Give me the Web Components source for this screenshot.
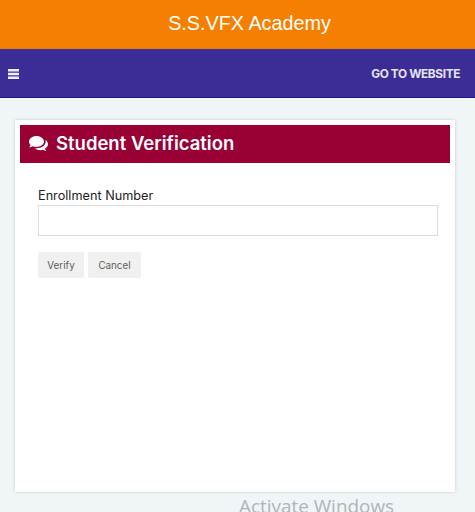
<!DOCTYPE html>
<html>
<head>
<meta charset="utf-8">
<title>Student Verification</title>
<style>
html, body { margin: 0; height: 512px; overflow: hidden; }
body { background: #f0f5f8; font-family: Inter, "Noto Sans", sans-serif; }
</style>
</head>
<body>
<top-banner>S.S.VFX Academy</top-banner>
<nav-bar></nav-bar>
<verify-card title="Student Verification"></verify-card>
<activate-mark></activate-mark>

<script>
class TopBanner extends HTMLElement {
    constructor() {
        super();
        this.shadow = this.attachShadow({ mode: 'open' });
    }

    connectedCallback() {
        this.shadow.innerHTML =
        `
        <style>
            :host{
                align-items: center;
                background-color: #f57f00;
                border-bottom: 1px solid #c98a10;
                box-sizing: border-box;
                color: #fff;
                display: flex;
                font-family: "Liberation Sans", Arial, sans-serif;
                font-size: 19.8px;
                height: 49px;
                justify-content: center;
                padding: 0 0 1px 24px;
            }
        </style>
        <slot></slot>
        `;
    }
}

class NavBar extends HTMLElement {
    constructor() {
        super();
        this.shadow = this.attachShadow({ mode: 'open' });
    }

    connectedCallback() {
        this.shadow.innerHTML =
        `
        <style>
            :host{
                align-items: center;
                background-color: #3b2c96;
                border-bottom: 1px solid #23128a;
                border-top: 1px solid #5a2390;
                box-sizing: border-box;
                color: #e6e4f6;
                display: flex;
                height: 49px;
                justify-content: space-between;
                padding: 0 15px 0 8px;
            }
            svg{
                display: block;
                fill: #eeeefa;
                height: 10px;
                width: 11px;
            }
            a{
                font-size: 11.8px;
                font-weight: 700;
                letter-spacing: -0.35px;
            }
        </style>
        <svg viewBox="0 0 11 10"><path d="M0 0h11v2.500H0zM0 3.750h11v2.500H0zM0 7.500h11V10H0z"/></svg>
        <a>GO TO WEBSITE</a>
        `;
    }
}

class VerifyCard extends HTMLElement {
    constructor() {
        super();
        this.shadow = this.attachShadow({ mode: 'open' });
    }

    connectedCallback() {
        this.shadow.innerHTML =
        `
        <style>
            :host{
                background-color: #fff;
                box-shadow: 0 0 3px rgba(0, 0, 0, 0.18);
                box-sizing: border-box;
                display: block;
                height: 372px;
                margin: 22px 20px 0 15px;
                padding: 5px;
            }
            header{
                align-items: center;
                background-color: #990033;
                box-sizing: border-box;
                color: #fff;
                display: flex;
                font-size: 18.5px;
                font-weight: 600;
                gap: 8px;
                height: 38px;
                padding: 0 0 3px 9px;
            }
            svg{
                fill: #fff;
                height: 16px;
                margin-top: 3px;
                width: 19px;
            }
            form{
                padding: 25px 12px 0 18px;
            }
            label{
                color: #222;
                display: block;
                font-size: 12.7px;
                line-height: 15px;
            }
            input{
                border: 1px solid #dcdcdc;
                box-sizing: border-box;
                display: block;
                height: 31px;
                margin-top: 2px;
                width: 100%;
            }
            .buttons{
                display: flex;
                gap: 4px;
                margin-top: 16px;
            }
            button{
                background-color: #f0f0f0;
                border: 0;
                border-radius: 2px;
                color: #5c5c5c;
                font-family: inherit;
                font-size: 9.8px;
                height: 26px;
                padding: 0;
            }
            #verify{ width: 46px; }
            #cancel{ width: 53px; }
        </style>
        <header>
            <svg viewBox="0 0 19 16">
                <path d="M7.500 0C3.400 0 0 2.500 0 5.600c0 1.300.6 2.500 1.600 3.500-.3.900-.9 1.700-1.500 2.300 1.300 0 2.500-.5 3.400-1.200 1.200.5 2.600.8 4 .8 4.100 0 7.500-2.400 7.500-5.400S11.600 0 7.500 0z"/>
                <path d="M16.400 3.800c.2.600.3 1.200.3 1.800 0 3.700-3.900 6.600-8.800 6.700-.7 0-1.400 0-2-.1 1.300 1.300 3.300 2 5.500 2 .9 0 1.800-.1 2.600-.4.9.7 2.100 1.200 3.400 1.200-.6-.6-1.200-1.400-1.500-2.300 1.800-1 3.100-2.500 3.100-4.400 0-1.800-.9-3.300-2.600-4.500z"/>
            </svg>
            <span>${this.getAttribute('title')}</span>
        </header>
        <form>
            <label for="enrollment">Enrollment Number</label>
            <input id="enrollment" type="text">
            <div class="buttons">
                <button id="verify" type="button">Verify</button>
                <button id="cancel" type="button">Cancel</button>
            </div>
        </form>
        `;
    }
}

class ActivateMark extends HTMLElement {
    constructor() {
        super();
        this.shadow = this.attachShadow({ mode: 'open' });
    }

    connectedCallback() {
        this.shadow.innerHTML =
        `
        <style>
            :host{
                color: #b0b4b8;
                font-family: "Open Sans", sans-serif;
                font-size: 18.9px;
                left: 239px;
                line-height: 24px;
                position: absolute;
                top: 494px;
            }
        </style>
        Activate Windows
        `;
    }
}

customElements.define('top-banner', TopBanner);
customElements.define('nav-bar', NavBar);
customElements.define('verify-card', VerifyCard);
customElements.define('activate-mark', ActivateMark);
</script>
</body>
</html>
